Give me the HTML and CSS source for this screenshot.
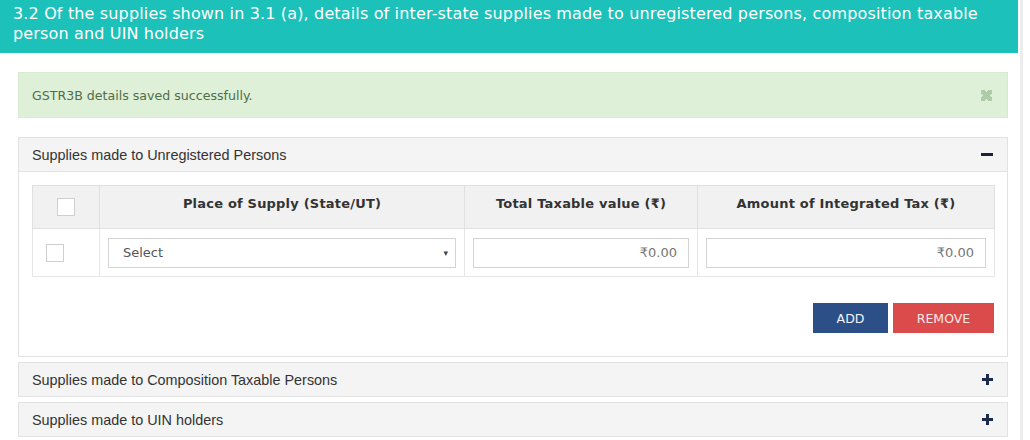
FILE: index.html
```html
<!DOCTYPE html>
<html>
<head>
<meta charset="utf-8">
<link rel="stylesheet" href="styles.css">
</head>
<body>
<div class="page">
  <div class="title">3.2 Of the supplies shown in 3.1 (a), details of inter-state supplies made to unregistered persons, composition taxable person and UIN holders</div>
  <div class="content">
    <div class="alert">
      <span>GSTR3B details saved successfully.</span>
      <span class="close" aria-label="close"></span>
    </div>

    <div class="panel">
      <div class="panel-heading">
        <span>Supplies made to Unregistered Persons</span>
        <span class="minus"></span>
      </div>
      <div class="panel-body">
        <table class="grid">
          <colgroup>
            <col class="c1"><col class="c2"><col class="c3"><col class="c4">
          </colgroup>
          <thead>
            <tr>
              <th class="chk-cell center"><span class="checkbox"></span></th>
              <th>Place of Supply (State/UT)</th>
              <th>Total Taxable value (&#8377;)</th>
              <th>Amount of Integrated Tax (&#8377;)</th>
            </tr>
          </thead>
          <tbody>
            <tr>
              <td class="chk-cell"><span class="checkbox"></span></td>
              <td><div class="select"><span>Select</span><span class="arrow">&#9662;</span></div></td>
              <td><div class="input">&#8377;0.00</div></td>
              <td><div class="input">&#8377;0.00</div></td>
            </tr>
          </tbody>
        </table>
        <div class="actions">
          <button class="btn add">ADD</button>
          <button class="btn remove">REMOVE</button>
        </div>
      </div>
    </div>

    <div class="panel">
      <div class="panel-heading">
        <span>Supplies made to Composition Taxable Persons</span>
        <span class="plus"></span>
      </div>
    </div>

    <div class="panel">
      <div class="panel-heading">
        <span>Supplies made to UIN holders</span>
        <span class="plus"></span>
      </div>
    </div>
  </div>
</div>
</body>
</html>
```

FILE: styles.css
```css
* { box-sizing: border-box; }
html, body { margin: 0; padding: 0; background: #fff; }
body {
  font-family: "DejaVu Sans", Verdana, sans-serif;
  color: #333;
  width: 1030px;
  height: 440px;
  overflow: hidden;
}
.page {
  width: 1023px;
  height: 440px;
  border-right: 3px solid #ececec;
}
.title {
  width: 1018px;
  height: 53px;
  background: #1cc1ba;
  color: #fff;
  font-size: 16px;
  letter-spacing: 0.15px;
  line-height: 20px;
  padding: 4px 20px 0 13px;
}
.content {
  width: 1018px;
  padding: 19px 10px 0 18px;
}
.alert {
  height: 46px;
  background: #dff0d8;
  border: 1px solid #d8ebd0;
  color: #4f6e49;
  font-size: 12.6px;
  display: flex;
  align-items: center;
  justify-content: space-between;
  padding: 0 15px 0 13px;
  margin-bottom: 19px;
}
.close {
  width: 11px;
  height: 11px;
  background:
    linear-gradient(45deg, transparent 36%, #b0cba9 36%, #b0cba9 64%, transparent 64%),
    linear-gradient(-45deg, transparent 36%, #b0cba9 36%, #b0cba9 64%, transparent 64%);
}
.panel {
  border: 1px solid #e2e2e2;
  background: #fff;
  margin-bottom: 5px;
}
.panel-heading {
  height: 33px;
  background: #f4f4f4;
  display: flex;
  align-items: center;
  justify-content: space-between;
  padding: 0 14px 0 13px;
  font-family: "Liberation Sans", Arial, sans-serif;
  font-size: 14.4px;
  color: #333;
}
.panel-body {
  border-top: 1px solid #e2e2e2;
  padding: 13px 13px 23px;
}
.minus {
  width: 12px;
  height: 3px;
  background: #1c2238;
}
.plus {
  width: 11px;
  height: 11px;
  background:
    linear-gradient(#1c2a4e, #1c2a4e) center / 11px 3px no-repeat,
    linear-gradient(#1c2a4e, #1c2a4e) center / 3px 11px no-repeat;
}
.grid {
  width: 962px;
  border-collapse: collapse;
  table-layout: fixed;
  border: 1px solid #e0e0e0;
}
.c1 { width: 67px; }
.c2 { width: 365px; }
.c3 { width: 233px; }
.c4 { width: 297px; }
.grid th {
  height: 43px;
  background: #f1f1f1;
  font-size: 13px;
  letter-spacing: 0.2px;
  font-weight: bold;
  color: #333;
  border: 1px solid #e0e0e0;
  text-align: center;
  padding: 0 0 8px;
}
.grid th.chk-cell { padding: 0; }
.grid td {
  height: 48px;
  border: 1px solid #e6e6e6;
  padding: 0 8px;
  vertical-align: middle;
}
.grid td.chk-cell { padding: 0 0 0 13px; }
.checkbox {
  display: inline-block;
  width: 18px;
  height: 18px;
  border: 1px solid #cfcfcf;
  background: #fff;
  vertical-align: middle;
}
.select, .input {
  height: 30px;
  border: 1px solid #d4d4d4;
  background: #fff;
  font-size: 13px;
  display: flex;
  align-items: center;
}
.select {
  justify-content: space-between;
  padding: 0 7px 0 14px;
  color: #555;
}
.arrow {
  font-size: 9px;
  color: #444;
}
.input {
  justify-content: flex-end;
  padding: 0 11px;
  color: #777;
}
.actions {
  display: flex;
  justify-content: flex-end;
  gap: 5px;
  margin-top: 26px;
}
.btn {
  height: 30px;
  border: none;
  font-family: "DejaVu Sans", Verdana, sans-serif;
  font-size: 12.5px;
  padding: 0;
  cursor: pointer;
}
.add {
  width: 75px;
  background: #2c4f87;
  color: #f2f5fb;
}
.remove {
  width: 101px;
  background: #db4b4b;
  color: #fbe6e6;
}
```
